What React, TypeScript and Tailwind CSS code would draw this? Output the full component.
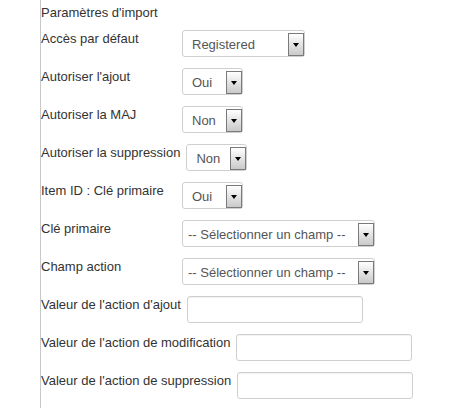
import React from "react";

function Arrow() {
  return (
    <div className="absolute right-0 top-[2px] h-[23px] w-[16px] border border-[#7a7a7a] bg-gradient-to-b from-white to-[#c9c9c9] flex items-center justify-center">
      <div className="w-0 h-0 border-l-[3.5px] border-r-[3.5px] border-t-[4px] border-l-transparent border-r-transparent border-t-black" />
    </div>
  );
}

function Select({ value, w, pl = "pl-[9px]" }: { value: string; w: string; pl?: string }) {
  return (
    <div className={`relative h-[27px] ${w} shrink-0 border border-[#cfcfcf] rounded-[3px] bg-white text-[#555] ${pl} pt-[2px] flex items-center`}>
      <span className="leading-[15px]">{value}</span>
      <Arrow />
    </div>
  );
}

function Input() {
  return (
    <div className="h-[27px] w-[176px] shrink-0 border border-[#cfcfcf] rounded-[3px] bg-white shadow-[inset_0_1px_1px_rgba(0,0,0,0.06)]" />
  );
}

function Row({ label, children }: { label: string; children: React.ReactNode }) {
  return (
    <div className="flex items-start mb-[11px]">
      <label className="min-w-[135px] mr-[6px] pt-[1px] leading-[15px] whitespace-nowrap">{label}</label>
      {children}
    </div>
  );
}

export default function App() {
  return (
    <div className="w-[454px] h-[408px] bg-white overflow-hidden" style={{ fontFamily: '"Liberation Sans", Arial, sans-serif' }}>
      <div className="ml-[40px] h-[408px] border-l border-[#c8c8c8] pt-[5px] text-[13px] text-[#333]">
        <div className="leading-[15px] mb-[10px]">Paramètres d'import</div>
        <Row label="Accès par défaut">
          <Select value="Registered" w="w-[123px]" />
        </Row>
        <Row label="Autoriser l'ajout">
          <Select value="Oui" w="w-[61px]" />
        </Row>
        <Row label="Autoriser la MAJ">
          <Select value="Non" w="w-[61px]" />
        </Row>
        <Row label="Autoriser la suppression">
          <Select value="Non" w="w-[61px]" />
        </Row>
        <Row label="Item ID : Clé primaire">
          <Select value="Oui" w="w-[61px]" />
        </Row>
        <Row label="Clé primaire">
          <Select value="-- Sélectionner un champ --" w="w-[193px]" pl="pl-[5px]" />
        </Row>
        <Row label="Champ action">
          <Select value="-- Sélectionner un champ --" w="w-[193px]" pl="pl-[5px]" />
        </Row>
        <Row label="Valeur de l'action d'ajout">
          <Input />
        </Row>
        <Row label="Valeur de l'action de modification">
          <Input />
        </Row>
        <Row label="Valeur de l'action de suppression">
          <Input />
        </Row>
      </div>
    </div>
  );
}
